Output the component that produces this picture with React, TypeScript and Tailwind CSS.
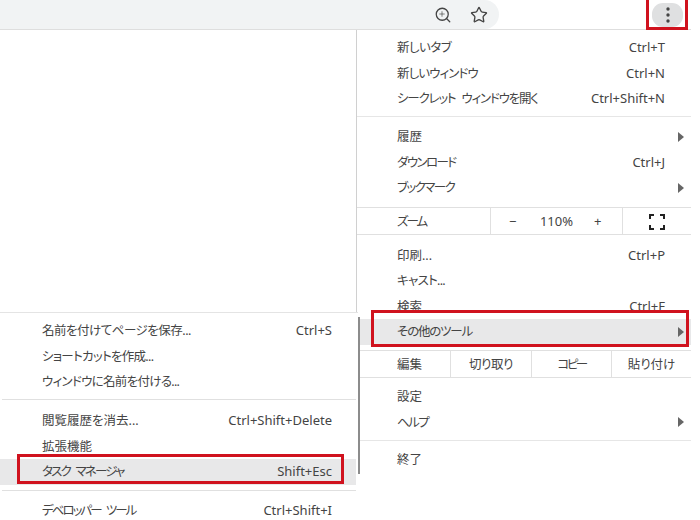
import { Plus, Search, Star } from "lucide-react";

const font = "font-['Noto_Sans','Noto_Sans_CJK_JP',sans-serif]";
const label = "text-[12.5px] [font-feature-settings:'palt'] [word-spacing:4px]";

interface RowProps {
  text: string;
  track?: string;
  shortcut?: string;
  arrow?: boolean;
  active?: boolean;
  sub?: boolean;
}

function MenuRow({ text, track, shortcut, arrow, active, sub }: RowProps) {
  return (
    <div
      className={`relative flex h-[25.5px] items-center ${sub ? "pl-[42px] pr-[24px]" : "pl-[40px] pr-[26px]"} ${active ? "bg-[#e8e8e9]" : ""}`}
    >
      <span className={`flex-1 whitespace-nowrap pt-[2px] ${label} ${track ?? ""}`}>{text}</span>
      {shortcut && <span className="whitespace-nowrap">{shortcut}</span>}
      {arrow && (
        <span className="absolute right-[7px] top-1/2 h-0 w-0 -translate-y-1/2 border-y-[5px] border-l-[6px] border-y-transparent border-l-[#666]" />
      )}
    </div>
  );
}

function EditRow() {
  return (
    <div className={`flex h-[28px] items-center border-y border-[#e0e0e0] pl-[40px] ${label}`}>
      <span className="w-[53px] shrink-0 pt-[2px]">編集</span>
      <span className="flex h-full w-[81px] items-center justify-center border-l border-[#e0e0e0] pt-[2px] tracking-[-0.5px]">切り取り</span>
      <span className="flex h-full w-[80px] items-center justify-center border-l border-[#e0e0e0] pt-[2px] tracking-[-2.5px]">コピー</span>
      <span className="flex h-full flex-1 items-center justify-center border-l border-[#e0e0e0] pt-[2px]">貼り付け</span>
    </div>
  );
}

function ZoomRow() {
  return (
    <div className="flex h-[28px] items-center border-y border-[#e0e0e0] pl-[40px]">
      <span className={`w-[93px] shrink-0 pt-[3px] tracking-[-2px] ${label}`}>ズーム</span>
      <div className="flex h-full w-[133px] items-center border-x border-[#e0e0e0] pl-[18px] pt-[2px]">
        <span className="w-[25px]">−</span>
        <span className="w-[45px] text-center">110%</span>
        <span className="ml-[15px]">+</span>
      </div>
      <div className="flex flex-1 justify-center pt-[1px]">
        <svg width="16" height="16" viewBox="0 0 16 16" fill="none" stroke="#222" strokeWidth="2">
          <path d="M1 5V1h4M11 1h4v4M15 11v4h-4M5 15H1v-4" />
        </svg>
      </div>
    </div>
  );
}

export default function App() {
  return (
    <div className={`relative h-[520px] w-[700px] overflow-hidden bg-white text-[13px] text-[#444] ${font}`}>
      {/* Toolbar */}
      <div className="flex h-[30px] w-[691px] items-start border-b border-[#dedede]">
        <div className="flex h-[29px] w-[499px] items-center justify-end gap-[18px] rounded-r-[15px] bg-[#f1f3f4] pr-[11px]">
          <div className="relative h-[18px] w-[18px]">
            <Search size={18} strokeWidth={1.7} color="#444" />
            <Plus size={8} strokeWidth={2} color="#444" className="absolute left-[4px] top-[4px]" />
          </div>
          <Star size={18} strokeWidth={1.8} color="#444" />
        </div>
        <div className="ml-auto mr-[8px] mt-[3px] flex h-[24px] w-[31px] items-center justify-center rounded-[11px] bg-[#dfe0e1]">
          <svg width="4" height="16" viewBox="0 0 4 16" fill="#444">
            <circle cx="2" cy="2" r="1.7" />
            <circle cx="2" cy="8" r="1.7" />
            <circle cx="2" cy="14" r="1.7" />
          </svg>
        </div>
      </div>

      {/* Main menu */}
      <div className="absolute left-[356px] top-[30px] w-[335px] border-l border-[#d0d0d0] bg-white pt-[5px]">
        <MenuRow text="新しいタブ" track="tracking-[-0.5px]" shortcut="Ctrl+T" />
        <MenuRow text="新しいウィンドウ" track="tracking-[-0.9px]" shortcut="Ctrl+N" />
        <MenuRow text="シークレット ウィンドウを開く" track="tracking-[-1.2px]" shortcut="Ctrl+Shift+N" />
        <div className="mb-[7px] mt-[4.5px] h-px bg-[#e6e6e6]" />
        <MenuRow text="履歴" arrow />
        <MenuRow text="ダウンロード" track="tracking-[-1.6px]" shortcut="Ctrl+J" />
        <MenuRow text="ブックマーク" track="tracking-[-1.6px]" arrow />
        <div className="h-[6.5px]" />
        <ZoomRow />
        <div className="h-[7.5px]" />
        <MenuRow text="印刷..." shortcut="Ctrl+P" />
        <MenuRow text="キャスト..." track="tracking-[-0.7px]" />
        <MenuRow text="検索" shortcut="Ctrl+F" />
        <MenuRow text="その他のツール" track="tracking-[-1.2px]" arrow active />
        <div className="h-[5.5px]" />
        <EditRow />
        <div className="h-[6px]" />
        <MenuRow text="設定" />
        <MenuRow text="ヘルプ" track="tracking-[-1.6px]" arrow />
        <div className="mb-[6px] mt-[5px] h-px bg-[#e6e6e6]" />
        <MenuRow text="終了" />
      </div>

      {/* Submenu */}
      <div className="absolute left-0 top-[312px] w-[358px] border-t border-[#e4e4e4] bg-white pr-[2px] pt-[5px]">
        <MenuRow sub text="名前を付けてページを保存..." track="tracking-[-0.5px]" shortcut="Ctrl+S" />
        <MenuRow sub text="ショートカットを作成..." track="tracking-[-0.7px]" />
        <MenuRow sub text="ウィンドウに名前を付ける..." track="tracking-[-0.7px]" />
        <div className="mb-[8px] ml-[2px] mt-[4.5px] h-px bg-[#e0e0e0]" />
        <MenuRow sub text="閲覧履歴を消去..." shortcut="Ctrl+Shift+Delete" />
        <MenuRow sub text="拡張機能" />
        <MenuRow sub text="タスク マネージャ" track="tracking-[-1.8px]" shortcut="Shift+Esc" active />
        <div className="mb-[7px] ml-[2px] mt-[5px] h-px bg-[#e0e0e0]" />
        <MenuRow sub text="デベロッパー ツール" track="tracking-[-2px]" shortcut="Ctrl+Shift+I" />
        <div className="absolute left-[358px] top-[4px] h-[157px] w-[2px] bg-[#8c8c8c]" />
      </div>

      {/* Red annotation boxes */}
      <div className="absolute left-[646px] top-0 h-[30px] w-[42px] border-[3px] border-t-0 border-[#d0121e]" />
      <div className="absolute left-[371px] top-[310px] h-[37px] w-[318px] border-[3px] border-[#d0121e]" />
      <div className="absolute left-[17px] top-[454px] h-[30px] w-[327px] border-[3px] border-[#d0121e]" />
    </div>
  );
}
